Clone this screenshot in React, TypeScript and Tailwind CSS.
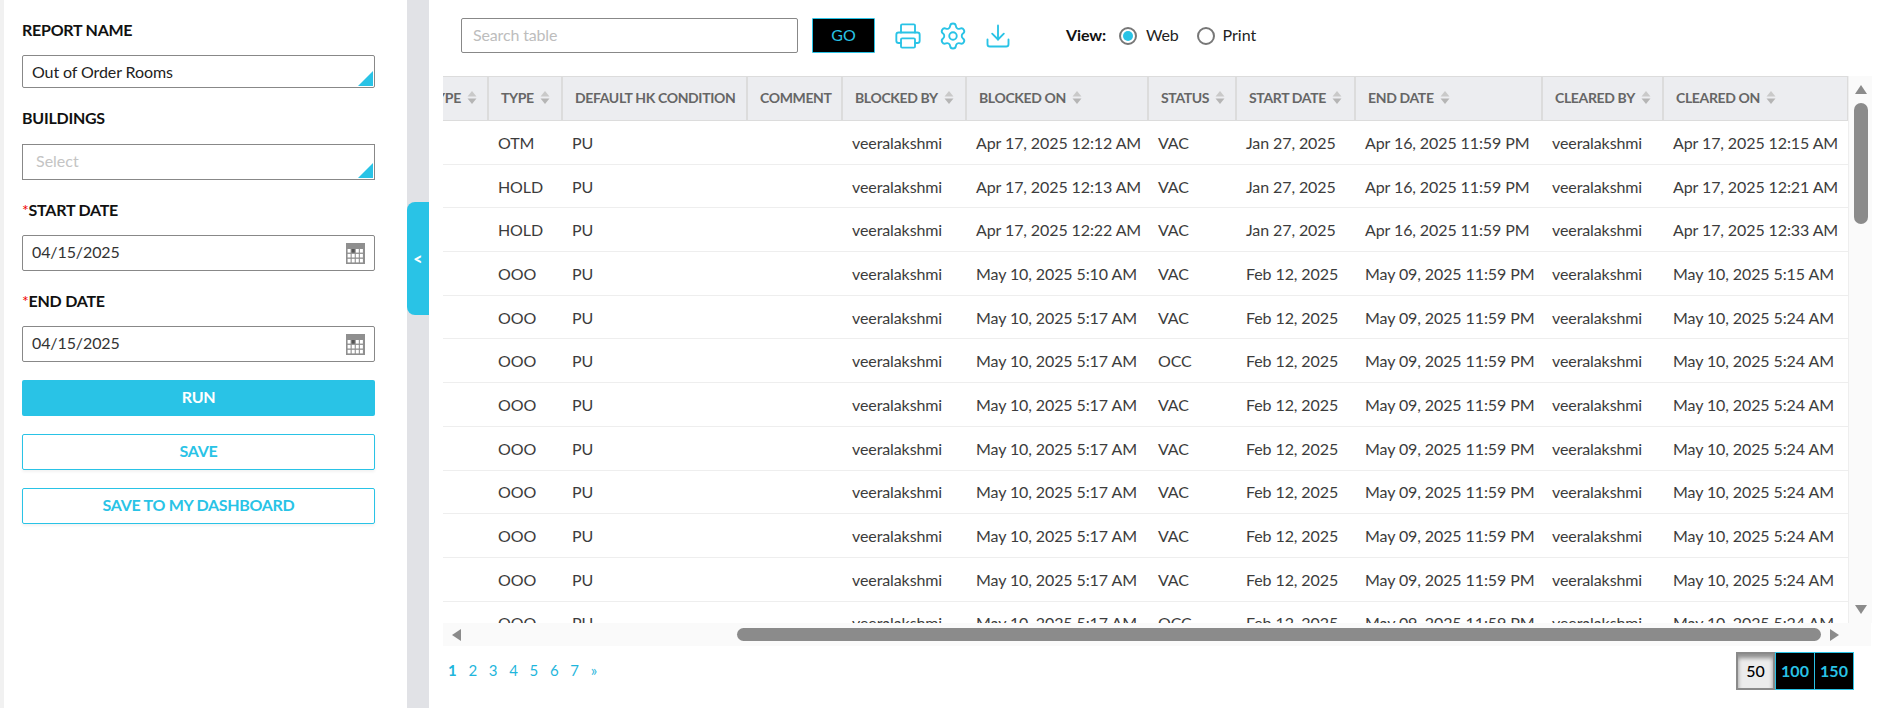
import React from "react";
import { Printer, Settings, Download } from "lucide-react";

const cols = "grid-cols-[46px_74px_185px_95px_124px_182px_88px_119px_187px_121px_183px]";

function Sort() {
  return (
    <svg width="10" height="15" viewBox="0 0 10 15" className="ml-[6px] shrink-0">
      <path d="M5 1 L9.5 6.5 H0.5 Z" fill="#c9c9c9" />
      <path d="M5 14 L9.5 8.5 H0.5 Z" fill="#b5b5b5" />
    </svg>
  );
}

function Triangle() {
  return (
    <svg width="15" height="15" viewBox="0 0 15 15" className="absolute right-[1px] bottom-[1px]">
      <path d="M15 0 V15 H0 Z" fill="#29c3e6" />
    </svg>
  );
}

function CalendarIcon() {
  return (
    <svg width="19" height="21" viewBox="0 0 19 21" className="shrink-0">
      <rect x="0" y="0" width="19" height="21" fill="#8f8f8f" />
      {[0, 1, 2, 3].map((c) =>
        [0, 1, 2].map((r) => (
          <rect
            key={`${c}-${r}`}
            x={1.6 + c * 4.1}
            y={6 + r * 4.9}
            width="3"
            height="3.6"
            fill={c === 1 && r === 0 ? "#555555" : "#ffffff"}
          />
        ))
      )}
    </svg>
  );
}

function Label({ children, req }: { children: React.ReactNode; req?: boolean }) {
  return (
    <div className="h-[24px] text-[16px] leading-[24px] font-bold text-[#111] tracking-[-0.25px]">
      {req && <span className="text-[#f00000] font-normal">*</span>}
      {children}
    </div>
  );
}

function DateField({ value }: { value: string }) {
  return (
    <div className="mt-[13px] h-[36px] border border-[#888] rounded-[2px] flex items-center justify-between pl-[9px] pr-[9px] text-[16px] tracking-[-0.1px] text-[#333]">
      <span className="pb-[2px]">{value}</span>
      <CalendarIcon />
    </div>
  );
}

const head: [string, boolean][] = [
  ["TYPE", true],
  ["DEFAULT HK CONDITION", false],
  ["COMMENT", false],
  ["BLOCKED BY", true],
  ["BLOCKED ON", true],
  ["STATUS", true],
  ["START DATE", true],
  ["END DATE", true],
  ["CLEARED BY", true],
  ["CLEARED ON", true],
];

const early = (type: string, blocked: string, cleared: string, status = "VAC") => [
  type, "PU", "", "veeralakshmi", `Apr 17, 2025 ${blocked} AM`, status, "Jan 27, 2025", "Apr 16, 2025 11:59 PM", "veeralakshmi", `Apr 17, 2025 ${cleared} AM`,
];
const late = (blocked: string, cleared: string, status = "VAC") => [
  "OOO", "PU", "", "veeralakshmi", `May 10, 2025 ${blocked} AM`, status, "Feb 12, 2025", "May 09, 2025 11:59 PM", "veeralakshmi", `May 10, 2025 ${cleared} AM`,
];

const rows = [
  early("OTM", "12:12", "12:15"),
  early("HOLD", "12:13", "12:21"),
  early("HOLD", "12:22", "12:33"),
  late("5:10", "5:15"),
  late("5:17", "5:24"),
  late("5:17", "5:24", "OCC"),
  late("5:17", "5:24"),
  late("5:17", "5:24"),
  late("5:17", "5:24"),
  late("5:17", "5:24"),
  late("5:17", "5:24"),
  late("5:17", "5:24", "OCC"),
];

export default function App() {
  return (
    <div
      className="flex h-[708px] w-[1881px] overflow-hidden bg-white"
      style={{ fontFamily: "Lato, 'Open Sans', sans-serif" }}
    >
      {/* left panel */}
      <aside className="w-[407px] shrink-0 border-l-[4px] border-[#f1f1f1] pl-[18px] pr-[32px] pt-[18px]">
        <Label>REPORT NAME</Label>
        <div className="relative mt-[13px] h-[33px] border border-[#888] rounded-[2px] flex items-center pl-[9px] pt-[1px] text-[16px] tracking-[-0.1px] text-[#222]">
          Out of Order Rooms
          <Triangle />
        </div>
        <div className="mt-[18px]">
          <Label>BUILDINGS</Label>
        </div>
        <div className="relative mt-[14px] h-[36px] border border-[#888] flex items-center pl-[13px] pb-[2px] text-[16px] text-[#c4c4c4]">
          Select
          <Triangle />
        </div>
        <div className="mt-[18px]">
          <Label req>START DATE</Label>
        </div>
        <DateField value="04/15/2025" />
        <div className="mt-[18px]">
          <Label req>END DATE</Label>
        </div>
        <DateField value="04/15/2025" />
        <button className="mt-[18px] block w-full h-[36px] pb-[2px] bg-[#29c3e6] rounded-[2px] text-white text-[16px] font-bold tracking-[-0.3px]">
          RUN
        </button>
        <button className="mt-[18px] block w-full h-[36px] pb-[2px] border border-[#29c3e6] rounded-[2px] text-[#29c3e6] text-[16px] font-bold tracking-[-0.3px] shadow-[0_2px_3px_rgba(0,0,0,0.05)]">
          SAVE
        </button>
        <button className="mt-[18px] block w-full h-[36px] pb-[2px] border border-[#29c3e6] rounded-[2px] text-[#29c3e6] text-[16px] font-bold tracking-[-0.3px] shadow-[0_2px_3px_rgba(0,0,0,0.05)]">
          SAVE TO MY DASHBOARD
        </button>
      </aside>

      {/* collapse rail */}
      <div className="relative w-[22px] shrink-0 bg-[#e1e2e6]">
        <div className="absolute left-0 top-[202px] w-[22px] h-[113px] bg-[#29c3e6] rounded-l-[8px] flex items-center justify-center text-white font-black text-[16px]">
          &lt;
        </div>
      </div>

      {/* main */}
      <main className="flex-1 min-w-0 pl-[14px] pr-[10px] flex flex-col">
        {/* toolbar */}
        <div className="h-[76px] shrink-0 pl-[18px] pt-[18px] flex items-start">
          <div className="w-[337px] h-[35px] border border-[#888] rounded-[2px] flex items-center pl-[11px] pb-[2px] text-[16px] tracking-[-0.15px] text-[#bdbdbd]">
            Search table
          </div>
          <div className="ml-[14px] w-[63px] h-[35px] pb-[2px] bg-black border border-[#29c3e6] rounded-[1px] flex items-center justify-center text-[16px] text-[#29c3e6]">
            GO
          </div>
          <div className="ml-[19px] h-[35px] flex items-center text-[#29c3e6]">
            <Printer size={28} strokeWidth={1.6} />
            <Settings size={30} strokeWidth={1.5} className="ml-[16px]" />
            <Download size={28} strokeWidth={1.6} className="ml-[16px]" />
          </div>
          <div className="ml-[54px] h-[35px] flex items-center text-[16px] text-[#222]">
            <span className="font-bold text-[#111] mr-[13px] pb-[2px] tracking-[-0.1px]">View:</span>
            <span className="w-[18px] h-[18px] rounded-full border-2 border-[#777] flex items-center justify-center">
              <span className="block w-[10px] h-[10px] rounded-full bg-[#29c3e6]" />
            </span>
            <span className="ml-[9px] pb-[2px] tracking-[-0.2px]">Web</span>
            <span className="ml-[18px] w-[18px] h-[18px] rounded-full border-2 border-[#777]" />
            <span className="ml-[8px] pb-[2px]">Print</span>
          </div>
        </div>

        {/* table + vertical scrollbar */}
        <div className="h-[547px] shrink-0 flex">
          <div className="w-[1405px] shrink-0 overflow-hidden">
            <div className={`grid ${cols} h-[45px] bg-[#ecedf0] border-y border-[#dcdcdc] border-r`}>
              <div className="overflow-hidden border-r-2 border-[#dcdcdc] flex items-center justify-end pr-[10px] pb-[2px] text-[14px] font-bold text-[#666] tracking-[-0.3px]">
                <span className="whitespace-nowrap shrink-0">TYPE</span>
                <Sort />
              </div>
              {head.map(([h, s]) => (
                <div
                  key={h}
                  className="pl-[12px] pb-[2px] flex items-center border-r-2 border-[#dcdcdc] last:border-r-0 text-[14px] font-bold text-[#666] tracking-[-0.35px] whitespace-nowrap"
                >
                  {h}
                  {s && <Sort />}
                </div>
              ))}
            </div>
            {rows.map((r, i) => (
              <div key={i} className={`grid ${cols} h-[43.7px] border-b border-[#eeeeee] items-center text-[16px] tracking-[-0.1px] text-[#3c3c3c]`}>
                <div />
                {r.map((c, j) => (
                  <div key={j} className="pl-[9px] whitespace-nowrap pt-[1px]">
                    {c}
                  </div>
                ))}
              </div>
            ))}
          </div>
          <div className="w-[24px] shrink-0 bg-[#fafafa] flex flex-col items-center border-l border-[#eeeeee] pt-[9px]">
            <svg width="12" height="9" viewBox="0 0 12 9">
              <path d="M6 0 L12 9 H0 Z" fill="#8b8b8b" />
            </svg>
            <div className="mt-[9px] w-[14px] h-[121px] bg-[#8b8b8b] rounded-full" />
            <svg width="12" height="9" viewBox="0 0 12 9" className="mt-[381px]">
              <path d="M6 9 L12 0 H0 Z" fill="#8b8b8b" />
            </svg>
          </div>
        </div>

        {/* horizontal scrollbar */}
        <div className="h-[23px] shrink-0 bg-[#fafafa] flex items-center pl-[9px]">
          <svg width="9" height="12" viewBox="0 0 9 12" className="shrink-0">
            <path d="M0 6 L9 0 V12 Z" fill="#8b8b8b" />
          </svg>
          <div className="ml-[276px] w-[1084px] h-[13px] rounded-full bg-[#8b8b8b] shrink-0" />
          <svg width="9" height="12" viewBox="0 0 9 12" className="ml-[9px] shrink-0">
            <path d="M9 6 L0 0 V12 Z" fill="#8b8b8b" />
          </svg>
        </div>

        {/* pagination */}
        <div className="flex-1 flex items-start justify-between pl-[5px] pr-[17px] pt-[6px]">
          <div className="flex h-[36px] items-center text-[15px] text-[#1fb6dc]">
            {["1", "2", "3", "4", "5", "6", "7", "»"].map((p, i) => (
              <span key={p} className={`w-[20.4px] ${i === 0 ? "font-bold" : ""}`}>
                {p}
              </span>
            ))}
          </div>
          <div className="flex h-[38px] font-bold text-[16px]">
            <div className="w-[39px] flex items-center justify-center border-2 border-[#8a8a8a] bg-[#ececec] text-black font-medium shadow-[inset_0_4px_4px_rgba(0,0,0,0.4)]">
              50
            </div>
            <div className="w-[40px] flex items-center justify-center bg-black border border-[#29c3e6] text-[#29c3e6]">100</div>
            <div className="w-[39px] flex items-center justify-center bg-black border border-l-0 border-[#29c3e6] text-[#29c3e6]">150</div>
          </div>
        </div>
      </main>
    </div>
  );
}
